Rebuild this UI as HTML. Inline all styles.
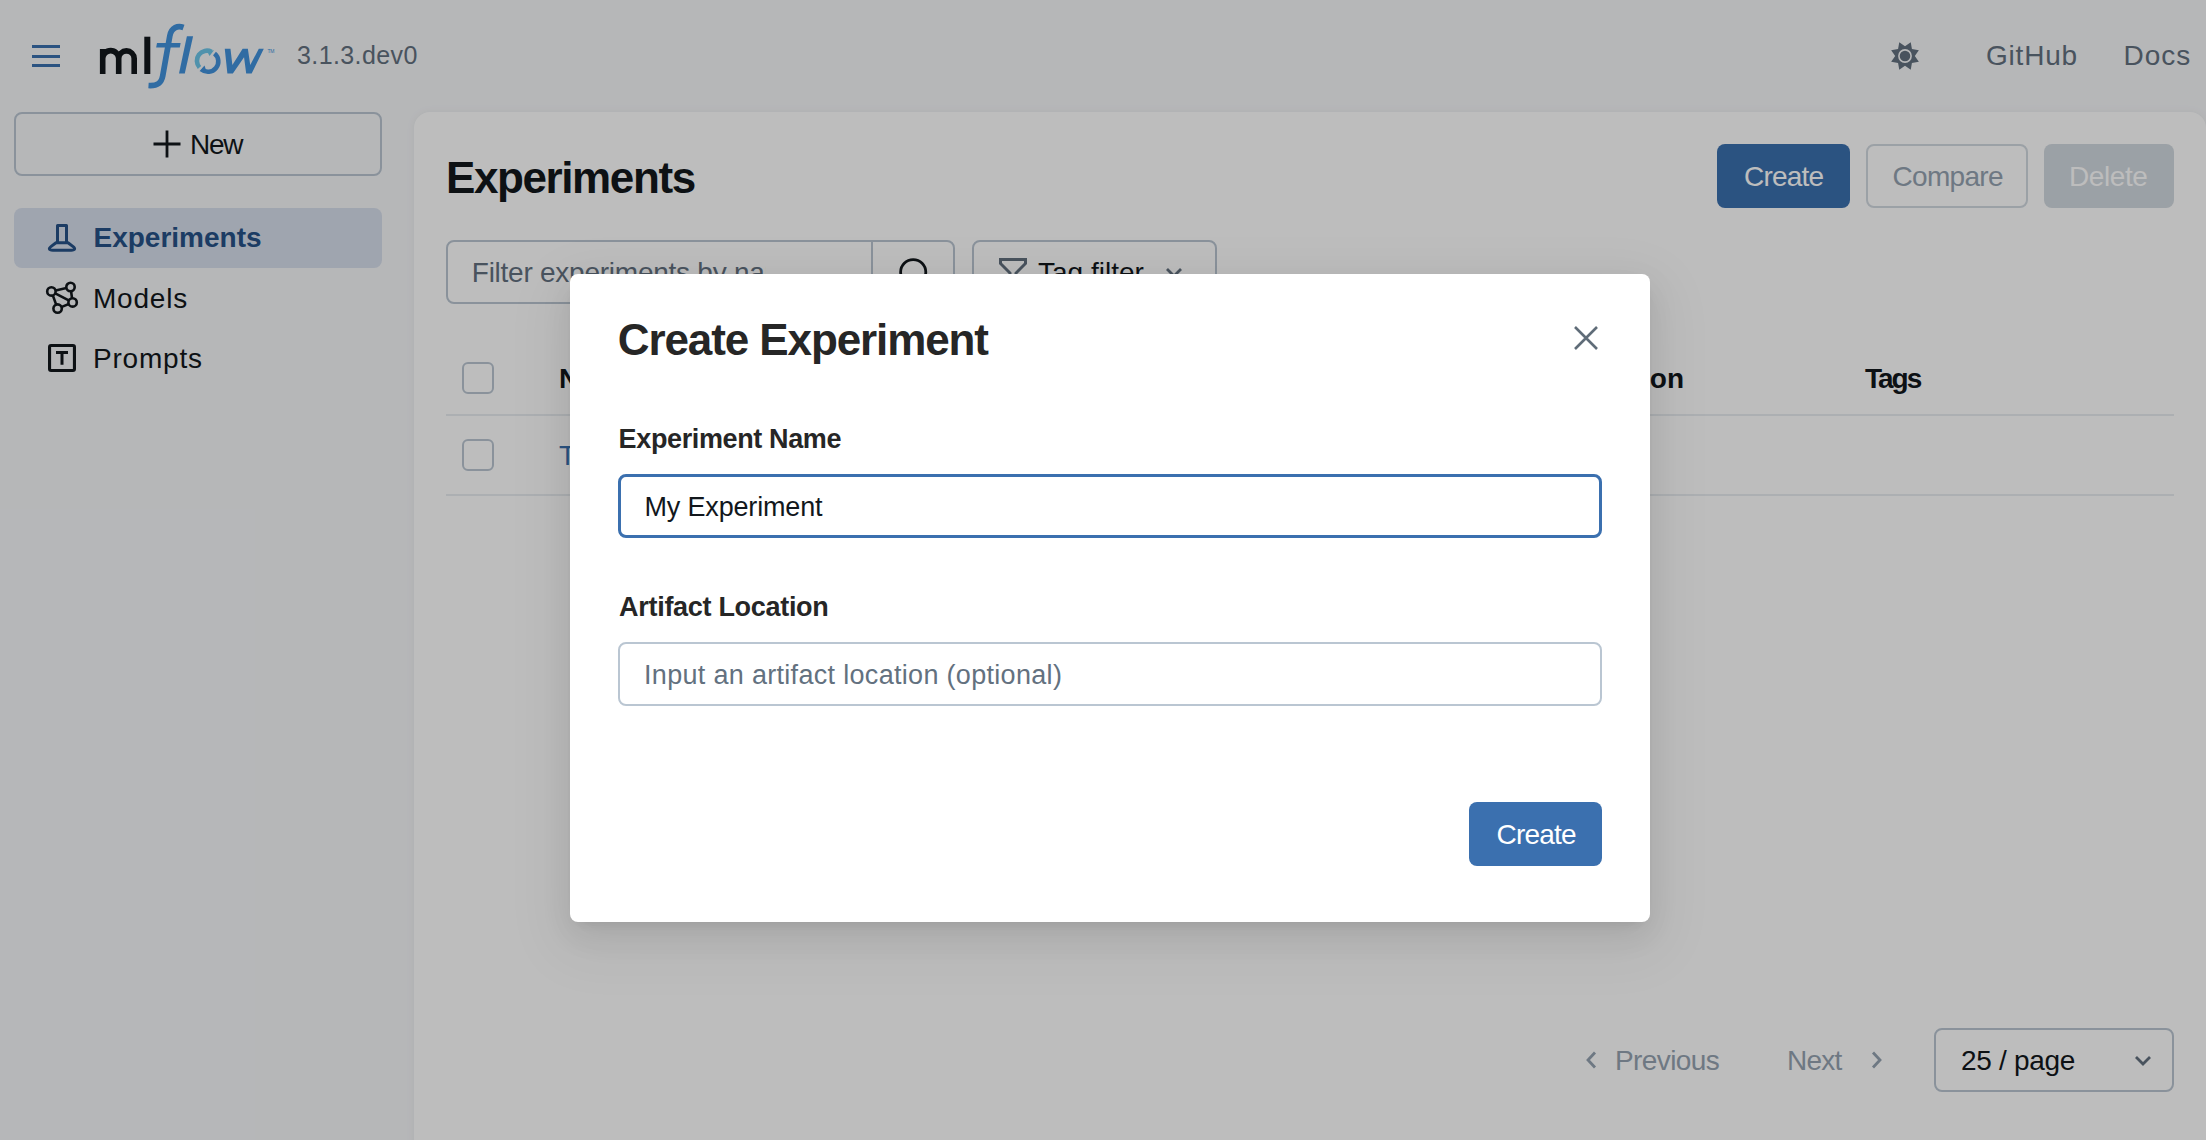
<!DOCTYPE html>
<html><head><meta charset="utf-8">
<style>
*{box-sizing:border-box;margin:0;padding:0}
html,body{width:2206px;height:1140px;overflow:hidden}
body{background:#f6f7f9;font-family:"Liberation Sans",sans-serif;color:#12171c;position:relative}
.a{position:absolute;white-space:nowrap;line-height:1}
.b{font-weight:bold}
.box{position:absolute}
svg{position:absolute;overflow:visible}
</style></head><body>

<!-- header -->
<div class="box" style="left:32px;top:45px;width:28px;height:3px;background:#3b70af"></div>
<div class="box" style="left:32px;top:54.5px;width:28px;height:3px;background:#3b70af"></div>
<div class="box" style="left:32px;top:64px;width:28px;height:3px;background:#3b70af"></div>

<svg style="left:0;top:0" width="300" height="100" viewBox="0 0 300 100">
  <path d="M102.7 74 V48.9 M102.7 58.6 A8 8 0 0 1 118.7 58.6 V74 M118.7 58.6 A7.75 7.75 0 0 1 134.2 58.6 V74" fill="none" stroke="#12171c" stroke-width="5.6"/>
  <rect x="144.3" y="36.7" width="6" height="37.3" fill="#12171c"/>
  <path d="M183.5 27.5 C178 25.5 171.5 27 169.8 36 L162.7 76 C161.2 84 156.5 86 148.5 85.5" fill="none" stroke="#4192dc" stroke-width="5.7"/>
  <path d="M157 43 L180.6 43 L179.8 47.5 L156.2 47.5 Z" fill="#4192dc"/>
  <path d="M186.9 36.2 L193.1 36.2 L184.8 73.6 L179 73.6 Z" fill="#4192dc"/>
  <path d="M199.5 67.5 A10.1 10.1 0 0 1 211.5 51.7" fill="none" stroke="#6cc6e9" stroke-width="4.6"/>
  <path d="M207 51 L214 50.3 L209.5 56 Z" fill="#6cc6e9"/>
  <path d="M214.5 53.5 A10.1 10.1 0 0 1 201.5 69.5" fill="none" stroke="#4192dc" stroke-width="4.6"/>
  <path d="M206 70 L199.5 71.2 L204.5 65.5 Z" fill="#4192dc"/>
  <path d="M224.76 48.81 L230.48 48.81 L232.38 65 L242.62 48.81 L247.86 48.81 L250.24 65 L258.81 48.81 L263.81 48.81 L251.67 73.57 L246.19 73.57 L244.05 57.14 L232.86 73.57 L227.38 73.57 Z" fill="#4192dc"/>
  <text x="267.4" y="52.8" font-size="5" letter-spacing="-0.3" fill="#4192dc" font-family="Liberation Sans">TM</text>
</svg>

<div class="a" style="left:297px;top:43.3px;font-size:25px;letter-spacing:0.4px;color:#63717f">3.1.3.dev0</div>

<svg style="left:1890.8px;top:41.8px" width="28" height="28" viewBox="0 0 28 28">
  <path fill="#63717f" d="M8.26 0.14 L14.00 4.20 L19.74 0.14 L20.93 7.07 L27.86 8.26 L23.80 14.00 L27.86 19.74 L20.93 20.93 L19.74 27.86 L14.00 23.80 L8.26 27.86 L7.07 20.93 L0.14 19.74 L4.20 14.00 L0.14 8.26 L7.07 7.07 Z"/>
  <circle cx="14" cy="14" r="6.1" fill="#63717f" stroke="#f6f7f9" stroke-width="1.6"/>
</svg>

<div class="a" style="left:1986px;top:42.1px;font-size:28px;letter-spacing:0.8px;color:#63717f">GitHub</div>
<div class="a" style="left:2123.5px;top:42.1px;font-size:28px;letter-spacing:1px;color:#63717f">Docs</div>

<!-- sidebar -->
<div class="box" style="left:14px;top:112px;width:368px;height:64px;border:2px solid #bac6d2;border-radius:8px"></div>
<svg style="left:153px;top:130px" width="28" height="28" viewBox="0 0 28 28"><path d="M14 0.5V27.5M0.5 14H27.5" stroke="#12171c" stroke-width="2.8"/></svg>
<div class="a" style="left:190px;top:130.6px;font-size:28px;letter-spacing:-1.3px">New</div>

<div class="box" style="left:14px;top:208px;width:368px;height:60px;border-radius:8px;background:#d7dfec"></div>
<svg style="left:48px;top:224px" width="28" height="28" viewBox="0 0 28 28">
  <path d="M9.5 18.7 V1.5 H18.5 V18.7" fill="none" stroke="#265287" stroke-width="3" stroke-linejoin="round"/>
  <path d="M8 18.7 H20 L24.8 22.4 C27.6 24.5 27.2 26.2 23.2 26.2 H4.8 C0.8 26.2 0.4 24.5 3.2 22.4 Z" fill="none" stroke="#265287" stroke-width="3" stroke-linejoin="round"/>
</svg>
<div class="a b" style="left:93.5px;top:223.8px;font-size:28px;color:#265287">Experiments</div>

<svg style="left:46px;top:281px" width="32" height="32" viewBox="0 0 32 32">
  <path d="M5.4 10.4 L24.5 6 L26.6 21.4 L11.6 27.6 Z M5.4 10.4 L26.6 21.4" fill="none" stroke="#12171c" stroke-width="2.6"/>
  <circle cx="5.4" cy="10.4" r="4.2" fill="#f6f7f9" stroke="#12171c" stroke-width="2.6"/>
  <circle cx="24.5" cy="6" r="4.2" fill="#f6f7f9" stroke="#12171c" stroke-width="2.6"/>
  <circle cx="26.6" cy="21.4" r="4.2" fill="#f6f7f9" stroke="#12171c" stroke-width="2.6"/>
  <circle cx="11.6" cy="27.6" r="4.2" fill="#f6f7f9" stroke="#12171c" stroke-width="2.6"/>
</svg>
<div class="a" style="left:93px;top:285.1px;font-size:28px;letter-spacing:0.8px">Models</div>

<svg style="left:48px;top:344px" width="28" height="28" viewBox="0 0 28 28">
  <rect x="1.55" y="1.55" width="24.9" height="24.9" rx="1.5" fill="none" stroke="#12171c" stroke-width="3.1"/>
  <path d="M8 8.45 H20 M14 8 V20.7" fill="none" stroke="#12171c" stroke-width="3"/>
</svg>
<div class="a" style="left:93px;top:345.1px;font-size:28px;letter-spacing:0.8px">Prompts</div>

<!-- main panel -->
<div class="box" style="left:414px;top:112px;width:1792px;height:1100px;background:#fff;border-radius:16px;box-shadow:0 0 10px rgba(0,0,0,0.05)"></div>
<div class="a b" style="left:446px;top:156.4px;font-size:44px;letter-spacing:-1.4px">Experiments</div>

<div class="box" style="left:1717px;top:144px;width:133px;height:64px;border-radius:8px;background:#3b70af"></div>
<div class="a" style="left:1744px;top:162.8px;font-size:28px;letter-spacing:-0.8px;color:#fff">Create</div>
<div class="box" style="left:1866px;top:144px;width:162px;height:64px;border-radius:8px;border:2px solid #d2d9e0"></div>
<div class="a" style="left:1892.5px;top:162.8px;font-size:28px;letter-spacing:-0.7px;color:#95a3b1">Compare</div>
<div class="box" style="left:2044px;top:144px;width:130px;height:64px;border-radius:8px;background:#d2d9e0"></div>
<div class="a" style="left:2069px;top:162.8px;font-size:28px;letter-spacing:-0.4px;color:#fff">Delete</div>

<div class="box" style="left:446px;top:240px;width:509px;height:64px;border:2px solid #bac6d2;border-radius:8px"></div>
<div class="box" style="left:871px;top:240px;width:2px;height:64px;background:#bac6d2"></div>
<div class="a" style="left:471.8px;top:259px;width:294px;letter-spacing:-0.25px;overflow:hidden;font-size:28px;color:#63717f">Filter experiments by name</div>
<svg style="left:898.5px;top:257.5px" width="36" height="36" viewBox="0 0 36 36"><circle cx="14.2" cy="14.2" r="12.6" fill="none" stroke="#12171c" stroke-width="2.8"/></svg>
<div class="box" style="left:971.5px;top:240px;width:245px;height:64px;border:2px solid #bac6d2;border-radius:8px"></div>
<svg style="left:999px;top:258px" width="28" height="28" viewBox="0 0 28 28"><path d="M1.5 1.5H26.5V5.5L17 15V26H11V15L1.5 5.5Z" fill="none" stroke="#63717f" stroke-width="3"/></svg>
<div class="a" style="left:1038px;top:259.1px;font-size:28px">Tag filter</div>
<svg style="left:1165px;top:266px" width="18" height="12" viewBox="0 0 18 12"><path d="M2 3L9 10L16 3" fill="none" stroke="#63717f" stroke-width="2.8"/></svg>

<!-- table -->
<div class="box" style="left:462px;top:362px;width:32px;height:32px;border:2px solid #bac6d2;border-radius:6px"></div>
<div class="a b" style="left:559px;top:365.1px;font-size:28px">Name</div>
<div class="a b" style="left:1530px;top:365.1px;font-size:28px">Description</div>
<div class="a b" style="left:1865px;top:365.1px;font-size:28px;letter-spacing:-2px">Tags</div>
<div class="box" style="left:446px;top:414px;width:1728px;height:2px;background:#e9ecf0"></div>
<div class="box" style="left:462px;top:439px;width:32px;height:32px;border:2px solid #bac6d2;border-radius:6px"></div>
<div class="a" style="left:559px;top:441.6px;font-size:28px;color:#3b70af">Test experiment</div>
<div class="box" style="left:446px;top:494px;width:1728px;height:2px;background:#e9ecf0"></div>

<!-- pagination -->
<svg style="left:1584px;top:1050px" width="16" height="20" viewBox="0 0 16 20"><path d="M11 2.5L4 10L11 17.5" fill="none" stroke="#95a3b1" stroke-width="2.8"/></svg>
<div class="a" style="left:1615px;top:1047.2px;font-size:28px;letter-spacing:-0.6px;color:#95a3b1">Previous</div>
<div class="a" style="left:1787px;top:1047.2px;font-size:28px;letter-spacing:-0.8px;color:#95a3b1">Next</div>
<svg style="left:1868px;top:1050px" width="16" height="20" viewBox="0 0 16 20"><path d="M5 2.5L12 10L5 17.5" fill="none" stroke="#95a3b1" stroke-width="2.8"/></svg>
<div class="box" style="left:1934px;top:1028px;width:240px;height:64px;border:2px solid #bac6d2;border-radius:8px"></div>
<div class="a" style="left:1961px;top:1047.2px;font-size:28px;letter-spacing:-0.3px">25 / page</div>
<svg style="left:2134px;top:1054px" width="18" height="14" viewBox="0 0 18 14"><path d="M2 3L9 10L16 3" fill="none" stroke="#63717f" stroke-width="2.8"/></svg>

<!-- overlay -->
<div class="box" style="left:0;top:0;width:2206px;height:1140px;background:rgba(0,0,0,0.26)"></div>

<!-- modal -->
<div class="box" style="left:570px;top:274px;width:1080px;height:648px;background:#fff;border-radius:8px;box-shadow:0 6px 12px -8px rgba(0,0,0,.12),0 12px 32px 0 rgba(0,0,0,.08),0 18px 56px 16px rgba(0,0,0,.05)"></div>
<div class="a b" style="left:617.8px;top:318.3px;font-size:44px;letter-spacing:-1.1px;color:#262626">Create Experiment</div>
<svg style="left:1574px;top:326px" width="24" height="24" viewBox="0 0 24 24"><path d="M1 1L23 23M23 1L1 23" stroke="#5f6c78" stroke-width="2.6"/></svg>
<div class="a b" style="left:618.6px;top:426.1px;font-size:27px;letter-spacing:-0.37px;color:#262626">Experiment Name</div>
<div class="box" style="left:618px;top:474px;width:984px;height:64px;border:3px solid #3b70af;border-radius:8px"></div>
<div class="a" style="left:644.5px;top:494.3px;font-size:27px;letter-spacing:-0.17px">My Experiment</div>
<div class="a b" style="left:619.1px;top:593.7px;font-size:27px;letter-spacing:-0.3px;color:#262626">Artifact Location</div>
<div class="box" style="left:618px;top:642px;width:984px;height:64px;border:2px solid #bac6d2;border-radius:8px"></div>
<div class="a" style="left:644px;top:662px;font-size:27px;letter-spacing:0.31px;color:#63717f">Input an artifact location (optional)</div>
<div class="box" style="left:1469px;top:802px;width:133px;height:64px;border-radius:8px;background:#3b70af"></div>
<div class="a" style="left:1496.5px;top:821.2px;font-size:28px;letter-spacing:-0.8px;color:#fff">Create</div>

</body></html>
